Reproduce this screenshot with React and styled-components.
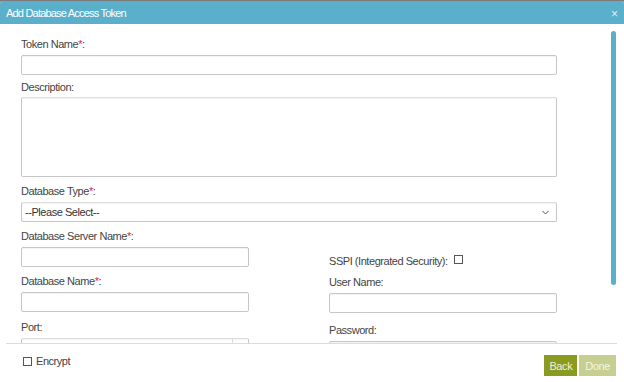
import React from 'react';
import styled, { createGlobalStyle } from 'styled-components';

const GlobalStyle = createGlobalStyle`
  html, body {
    margin: 0;
    padding: 0;
    background: #7b7b7b;
  }
  body {
    font-family: "Liberation Sans", Arial, sans-serif;
    letter-spacing: -0.45px;
    color: #444;
  }
  * { box-sizing: border-box; }
`;

const Dialog = styled.div`
  width: 624px;
  height: 381px;
  margin-top: 1px;
  background: #fff;
  display: flex;
  flex-direction: column;
  border-radius: 3px 3px 0 0;
  overflow: hidden;
`;

const Header = styled.div`
  flex: none;
  height: 23px;
  background: #5aafca;
  display: flex;
  align-items: center;
  justify-content: space-between;
  padding: 0 6px;
  color: #fff;
  font-size: 11px;
  letter-spacing: -0.8px;
`;

const Close = styled.span`
  font-size: 12px;
  letter-spacing: 0;
  color: #dff0f5;
  line-height: 1;
  margin-top: 2px;
`;

const Body = styled.div`
  flex: 1;
  position: relative;
  overflow: hidden;
`;

const Scrollbar = styled.div`
  position: absolute;
  top: 7px;
  left: 611px;
  width: 5px;
  height: 254px;
  border-radius: 3px;
  background: #5aafca;
`;

const Content = styled.div`
  width: 557px;
  padding: 13px 0 0 21px;
  display: flex;
  flex-direction: column;
  gap: 7px;
`;

const Field = styled.div`
  display: flex;
  flex-direction: column;
  gap: ${p => (p.$gap !== undefined ? p.$gap : 4)}px;
  margin-top: ${p => p.$shift || 0}px;
`;

const Label = styled.label`
  font-size: 11px;
  line-height: 14px;
  color: #444;
`;

const Req = styled.span`
  color: #e0262c;
`;

const Input = styled.div`
  width: ${p => p.$w || 536}px;
  height: ${p => p.$h || 20}px;
  border: 1px solid #c6c6c6;
  border-top-color: ${p => (p.$soft ? '#dedede' : '#c6c6c6')};
  border-radius: 2px;
  background: #fff;
  box-shadow: inset 0 1px 1px rgba(0, 0, 0, 0.05);
  display: flex;
  align-items: center;
  justify-content: space-between;
  font-size: 11px;
  color: #333;
`;

const SelectText = styled.span`
  padding-left: 3px;
`;

const Chevron = styled.svg`
  margin-right: 7px;
  margin-top: 1px;
`;

const Spinner = styled.div`
  width: 16px;
  height: 100%;
  border-left: 1px solid #dcdcdc;
`;

const Grid = styled.div`
  display: grid;
  grid-template-columns: 228px 228px;
  column-gap: 80px;
  row-gap: 7px;
`;

const CheckRow = styled.div`
  align-self: end;
  margin-bottom: -1px;
  display: flex;
  align-items: flex-start;
  gap: 6px;
  font-size: 11px;
  line-height: 14px;
`;

const Box = styled.span`
  display: inline-block;
  flex: none;
  width: 9px;
  height: 9px;
  border: 1px solid #555;
  background: #fff;
  margin-top: ${p => p.$top || 0}px;
`;

const Footer = styled.div`
  flex: none;
  height: 39px;
  margin: 0 7px 0 6px;
  border-top: 1px solid #dcdcdc;
  display: flex;
  align-items: flex-start;
  justify-content: space-between;
  padding: 10px 1px 0 17px;
`;

const Encrypt = styled.label`
  display: flex;
  align-items: center;
  gap: 4px;
  font-size: 11px;
  line-height: 14px;
  color: #444;
`;

const Buttons = styled.div`
  display: flex;
  gap: 2px;
  margin-top: 1px;
`;

const Button = styled.button`
  height: 21px;
  padding: 0 ${p => (p.$disabled ? 6 : 5)}px;
  border: none;
  border-radius: 0;
  font-family: inherit;
  letter-spacing: -0.4px;
  font-size: 11px;
  background: ${p => (p.$disabled ? '#c6cf8f' : '#8b9b1f')};
  color: ${p => (p.$disabled ? '#f3f5e4' : '#eef0dc')};
  cursor: ${p => (p.$disabled ? 'default' : 'pointer')};
`;

const LabelText = ({ text, required }) => (
  <Label>
    {text}
    {required && <Req>*</Req>}:
  </Label>
);

export default function App() {
  return (
    <>
      <GlobalStyle />
      <Dialog>
        <Header>
          <span>Add Database Access Token</span>
          <Close>×</Close>
        </Header>
        <Body>
          <Content>
            <Field>
              <LabelText text="Token Name" required />
              <Input />
            </Field>
            <Field $shift={-2} $gap={3}>
              <LabelText text="Description" />
              <Input $h={80} $soft />
            </Field>
            <Field>
              <LabelText text="Database Type" required />
              <Input $soft>
                <SelectText>--Please Select--</SelectText>
                <Chevron width="7" height="5" viewBox="0 0 7 5">
                  <path d="M0.5 1 L3.5 4 L6.5 1" fill="none" stroke="#555" strokeWidth="1" />
                </Chevron>
              </Input>
            </Field>
            <Grid>
              <Field>
                <LabelText text="Database Server Name" required />
                <Input $w={228} />
              </Field>
              <CheckRow>
                SSPI (Integrated Security):
                <Box $top={1} />
              </CheckRow>
              <Field>
                <LabelText text="Database Name" required />
                <Input $w={228} />
              </Field>
              <Field $shift={1}>
                <LabelText text="User Name" />
                <Input $w={228} />
              </Field>
              <Field>
                <LabelText text="Port" />
                <Input $w={228} $soft>
                  <span />
                  <Spinner />
                </Input>
              </Field>
              <Field $shift={3}>
                <LabelText text="Password" />
                <Input $w={228} />
              </Field>
            </Grid>
          </Content>
          <Scrollbar />
        </Body>
        <Footer>
          <Encrypt>
            <Box />
            Encrypt
          </Encrypt>
          <Buttons>
            <Button>Back</Button>
            <Button $disabled>Done</Button>
          </Buttons>
        </Footer>
      </Dialog>
    </>
  );
}
